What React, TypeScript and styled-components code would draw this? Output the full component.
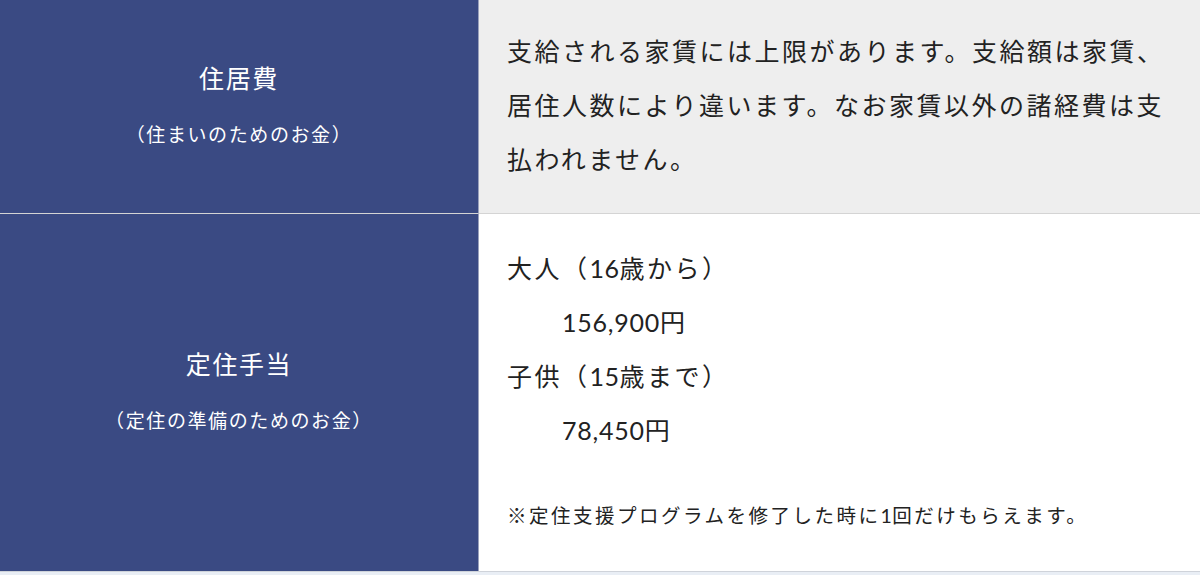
import React from "react";
import styled, { createGlobalStyle } from "styled-components";

const GlobalStyle = createGlobalStyle`
    html, body {
        margin: 0;
        padding: 0;
        background: #e9eef5;
    }
    body {
        font-family: "Lato", "Noto Sans CJK JP", sans-serif;
        -webkit-font-smoothing: antialiased;
    }
`

const Table = styled.div`
    width: 1200px;
    display: grid;
    grid-template-columns: 479px 1fr;
    border-bottom: 1px solid #cfd3da;
    background: #ffffff;
`

const HeadCell = styled.div<{ $last?: boolean }>`
    background: #3a4a83;
    color: #ffffff;
    border-right: 1px solid #9aa1bb;
    border-bottom: ${({ $last }) => $last ? "none" : "1px solid #d4d4d4"};
    display: flex;
    flex-direction: column;
    align-items: center;
    justify-content: center;
    gap: 27px;
    padding-bottom: 4px;
    letter-spacing: 0.1em;
    text-align: center;
    .title {
        font-size: 25px;
        line-height: 34px;
    }
    .sub {
        font-size: 19px;
        line-height: 26px;
    }
`

const BodyCell = styled.div<{ $shade?: boolean; $last?: boolean }>`
    background: ${({ $shade }) => $shade ? "#eeeeee" : "#ffffff"};
    border-bottom: ${({ $last }) => $last ? "none" : "1px solid #d4d4d4"};
    color: #222222;
    font-size: 25px;
    line-height: 54px;
    letter-spacing: 0.1em;
    padding: ${({ $last }) => $last ? "27px 28px 36px" : "24px 28px 27px"};
    p {
        margin: 0;
    }
`

const Amount = styled.p`
    padding-left: 2.2em;
    letter-spacing: 0.03em;
`

const Num = styled.span`
    letter-spacing: 0.02em;
`

const Note = styled.p`
    font-size: 19.5px;
    line-height: 38px;
    margin-top: 40px !important;
`

export default function App(): JSX.Element {
    return (
        <>
            <GlobalStyle />
            <Table>
                <HeadCell>
                    <span className="title">住居費</span>
                    <span className="sub">（住まいのためのお金）</span>
                </HeadCell>
                <BodyCell $shade>
                    <p>支給される家賃には上限があります。支給額は家賃、居住人数により違います。なお家賃以外の諸経費は支払われません。</p>
                </BodyCell>
                <HeadCell $last>
                    <span className="title">定住手当</span>
                    <span className="sub">（定住の準備のためのお金）</span>
                </HeadCell>
                <BodyCell $last>
                    <p>大人（<Num>16</Num>歳から）</p>
                    <Amount>156,900円</Amount>
                    <p>子供（<Num>15</Num>歳まで）</p>
                    <Amount>78,450円</Amount>
                    <Note>※定住支援プログラムを修了した時に<Num>1</Num>回だけもらえます。</Note>
                </BodyCell>
            </Table>
        </>
    )
}
